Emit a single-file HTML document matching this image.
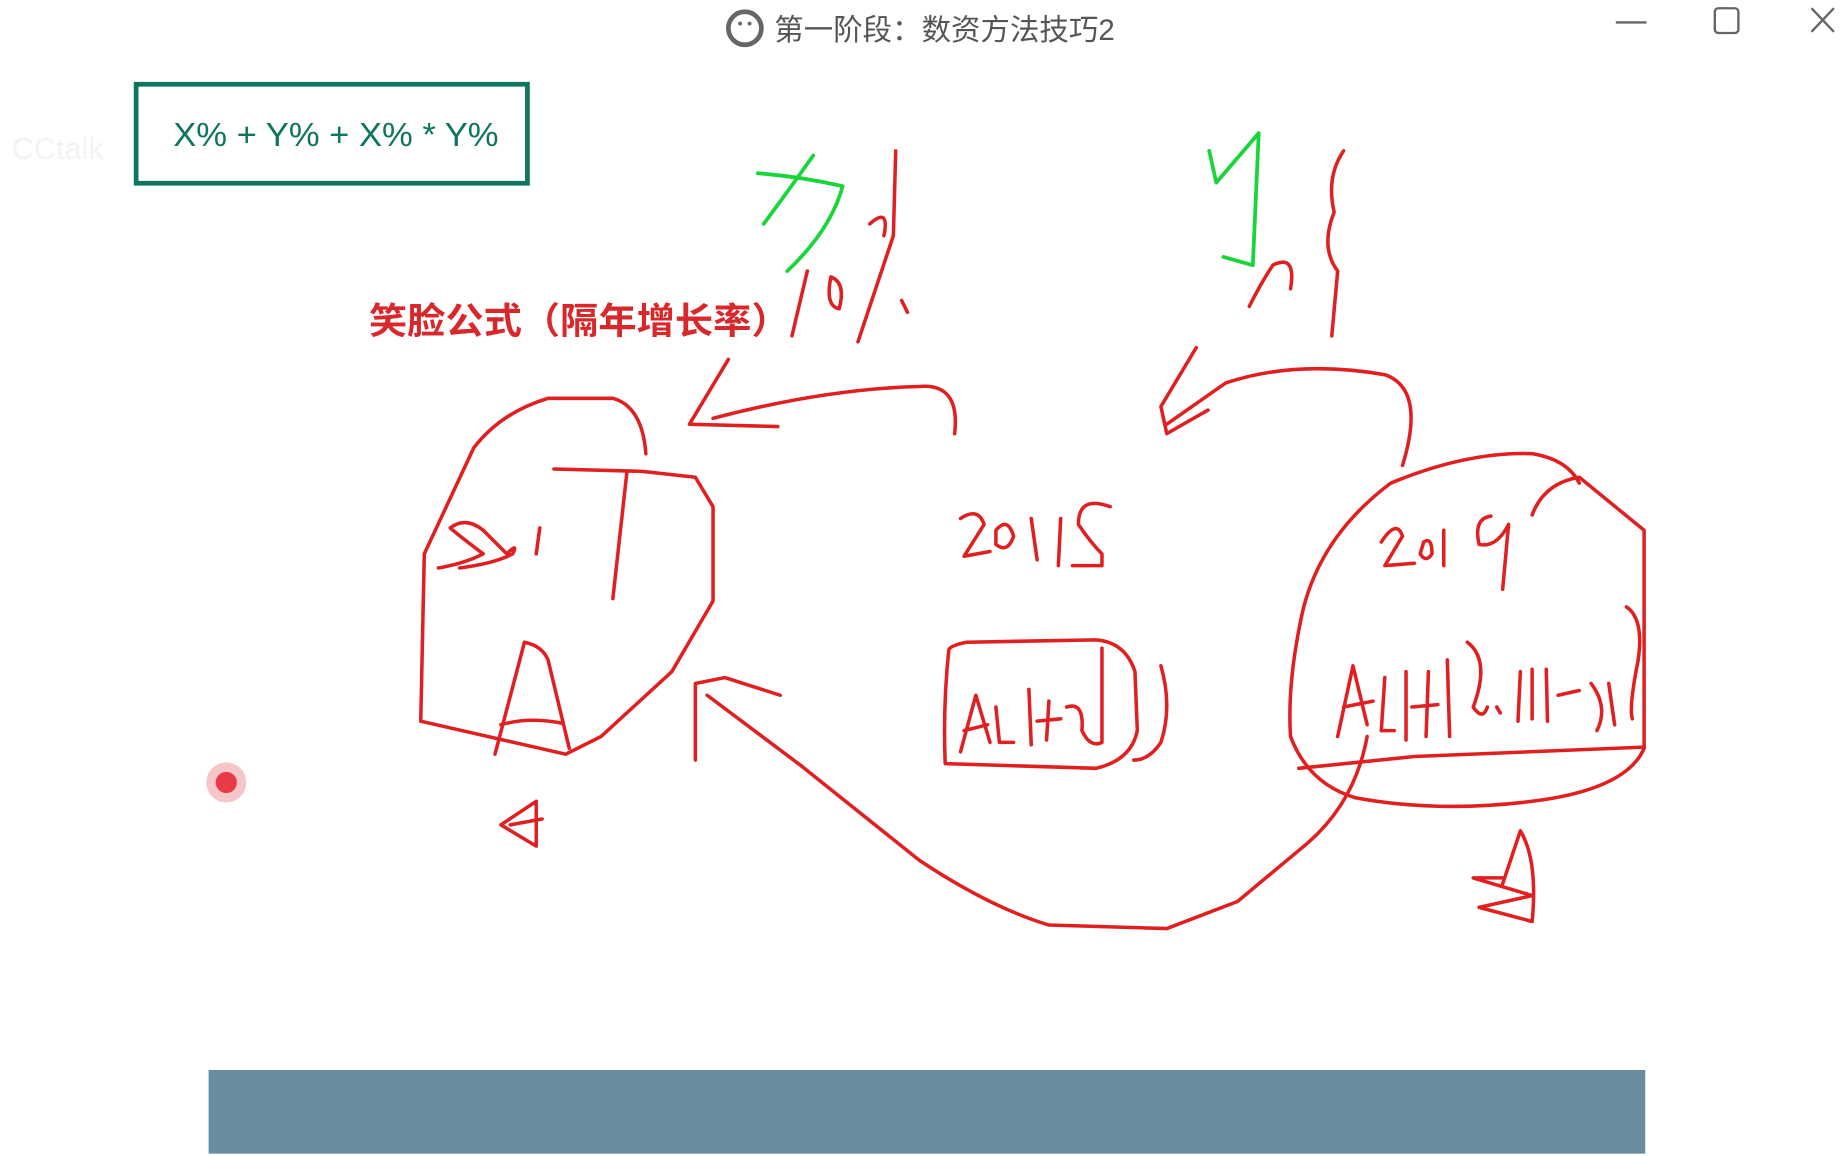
<!DOCTYPE html>
<html><head><meta charset="utf-8"><style>
html,body{margin:0;padding:0;background:#fff;overflow:hidden}
svg{display:block}
</style></head><body>
<svg width="1848" height="1156" viewBox="0 0 1568 981" preserveAspectRatio="none" xmlns="http://www.w3.org/2000/svg">
<rect width="1568" height="981" fill="#fff"/>
<circle cx="632" cy="24" r="14" fill="none" stroke="#666" stroke-width="4"/>
<circle cx="628" cy="20" r="1.6" fill="#666"/><circle cx="636" cy="20" r="1.6" fill="#666"/>
<text x="657" y="34" font-family="Liberation Sans, Noto Sans CJK SC, sans-serif" font-size="25" fill="#555">第一阶段：数资方法技巧2</text>
<line x1="1371" y1="19" x2="1397" y2="19" stroke="#666" stroke-width="2"/>
<rect x="1455" y="7" width="20" height="21" rx="3" fill="none" stroke="#666" stroke-width="2"/>
<path d="M1537 7 L1556 27 M1556 7 L1537 27" stroke="#666" stroke-width="2"/>
<text x="10" y="135" font-family="Liberation Sans, sans-serif" font-size="26" fill="#f3f3f3">CCtalk</text>
<rect x="115.5" y="71.5" width="332" height="84" fill="#fff" stroke="#0e7560" stroke-width="4"/>
<text x="285" y="124" text-anchor="middle" textLength="276" lengthAdjust="spacingAndGlyphs" font-family="Liberation Sans, sans-serif" font-size="28" fill="#0e7560">X% + Y% + X% * Y%</text>
<text x="313" y="283" textLength="357" lengthAdjust="spacingAndGlyphs" font-family="Liberation Sans, Noto Sans CJK SC, sans-serif" font-size="31" font-weight="600" fill="#d9282c">笑脸公式（隔年增长率）</text>
<g fill="none" stroke="#e02020" stroke-width="3" stroke-linecap="round" stroke-linejoin="round">
<path d="M685 230 L672 285"/>
<path d="M705 235 Q700 260 712 262 Q718 240 705 235"/>
<path d="M760 128 L758 200 L728 290"/>
<path d="M738 190 Q755 175 750 200"/>
<path d="M765 255 L770 265"/>
<path d="M1140 128 Q1125 150 1132 180 Q1120 210 1135 230 L1130 285"/>
<path d="M1060 260 Q1070 240 1080 225 Q1100 215 1095 245"/>
<path d="M810 368 Q815 325 780 328 Q700 330 605 355"/>
<path d="M618 305 L585 360 L660 362"/>
<path d="M1190 395 Q1210 330 1175 318 Q1100 305 1040 325 L990 360"/>
<path d="M1015 295 L985 345 L990 368 L1025 348"/>
<path d="M548 385 Q545 345 520 338 L465 338 Q425 350 402 380 L360 470 L357 612 L480 640 L510 625 L570 570 L605 510 L605 430 L590 405 L545 400 L470 398"/>
<path d="M532 400 L520 508"/>
<path d="M372 482 Q395 478 410 470 Q390 455 382 448 Q395 438 410 450 L430 470 Q440 460 435 470 Q420 478 390 482"/>
<path d="M458 448 L455 470"/>
<path d="M420 640 L445 545 Q460 548 465 560 L483 635"/>
<path d="M425 615 Q450 608 478 614"/>
<path d="M455 680 L425 700 L455 718 L455 680 M433 700 L460 695"/>
<path d="M815 440 Q830 430 835 445 L818 472 L840 468"/>
<path d="M845 450 Q855 438 860 455 Q855 470 845 462 Z"/>
<path d="M875 440 L880 475"/>
<path d="M900 440 L898 480"/>
<path d="M942 430 Q915 420 915 445 Q925 460 935 470 L935 480 L910 480"/>
<path d="M805 552 Q800 600 802 648 L930 652 Q960 645 965 620 L963 570 Q955 545 930 543 L820 545 Q805 548 805 552"/>
<path d="M815 638 L828 590 L840 630 M818 620 L838 615 M845 600 L848 630 L860 630 M873 585 L875 632 M890 595 L888 628 M880 612 L900 610 M905 600 Q920 595 918 620 Q925 635 935 630 L935 550 M985 565 Q995 600 985 630 Q975 645 962 645"/>
<path d="M1340 410 Q1330 390 1300 385 Q1245 383 1180 410 Q1120 455 1105 520 Q1092 580 1095 625 Q1110 665 1150 677 Q1220 690 1300 680 Q1380 670 1395 635 L1395 450 L1340 405 Q1310 410 1300 437"/>
<path d="M1172 460 Q1185 440 1190 455 L1175 480 L1200 478 M1208 460 Q1215 455 1215 470 Q1210 478 1205 470 Z M1225 450 L1225 480 M1265 438 Q1250 440 1255 462 Q1270 465 1280 445 L1275 500"/>
<path d="M1135 625 L1148 565 L1160 615 M1140 600 L1165 595 M1175 575 L1172 620 L1183 620 M1193 570 L1193 628 M1212 570 L1210 625 M1198 600 L1220 598 M1228 560 L1230 625 M1245 545 Q1265 560 1250 600 Q1258 612 1262 600 M1270 600 L1273 605 M1290 570 L1288 612 M1300 568 L1300 610 M1312 568 L1313 612 M1322 590 L1340 586 M1350 580 Q1365 600 1355 620 M1365 580 L1370 615 M1380 515 Q1395 525 1390 560 Q1382 600 1385 610"/>
<path d="M1102 652 L1200 642 L1395 634"/>
<path d="M1160 625 Q1150 680 1110 715 L1050 765 L990 788 L890 785 Q840 770 780 730 L680 650 L600 590"/>
<path d="M590 645 L590 580 L615 575 L662 590"/>
<path d="M1275 750 L1290 705 Q1305 730 1300 782 L1255 770 L1300 760 L1250 745 L1275 745"/>
</g>
<g fill="none" stroke="#18d63a" stroke-width="3.2" stroke-linecap="round" stroke-linejoin="round">
<path d="M643 147 Q680 150 715 158 Q705 195 668 230"/>
<path d="M690 132 L670 160 L648 190"/>
<path d="M1026 128 L1032 155 L1068 113 L1063 225 L1038 218"/>
</g>
<circle cx="192" cy="664" r="17" fill="#f7c6c8"/>
<circle cx="192" cy="664" r="9" fill="#ea3a45"/>
<rect x="177" y="908" width="1219" height="71" fill="#6a8c9f"/>
</svg>
</body></html>
